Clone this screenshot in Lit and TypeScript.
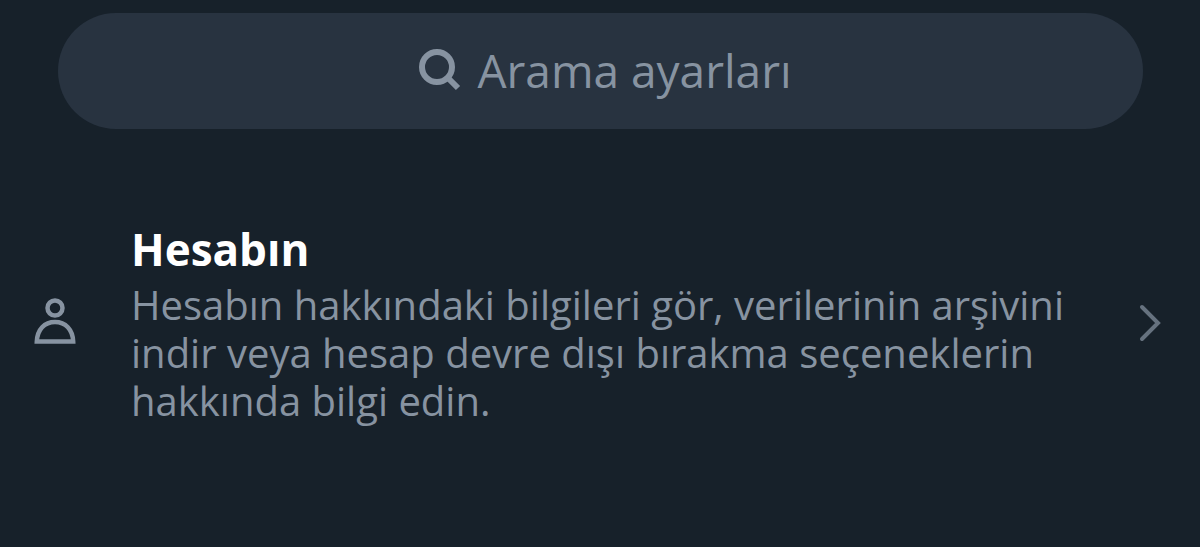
import { LitElement, html, css } from "lit";
import { customElement } from "lit/decorators.js";

@customElement("app-root")
export class AppRoot extends LitElement {
  static styles = css`
    :host {
      display: block;
      box-sizing: border-box;
      min-height: 100vh;
      padding: 13px 0 0;
      background: #17212a;
      color: #8793a1;
      font-family: "Open Sans", "Noto Sans", sans-serif;
    }
    .search {
      display: flex;
      align-items: center;
      justify-content: center;
      gap: 16px;
      box-sizing: border-box;
      height: 116px;
      margin: 0 57px 0 58px;
      padding: 0 0 2px 10px;
      border-radius: 58px;
      background: #283340;
      cursor: text;
    }
    .search-icon {
      width: 42px;
      height: 42px;
      flex: none;
    }
    .search-input {
      field-sizing: content;
      padding: 0;
      border: 0;
      outline: 0;
      background: none;
      color: inherit;
      font: 400 46px/64px "Open Sans", "Noto Sans", sans-serif;
    }
    .search-input::placeholder {
      color: inherit;
      opacity: 1;
    }
    .row {
      display: flex;
      align-items: center;
      gap: 55px;
      margin-top: 92px;
      padding: 0 39px 0 34px;
      color: inherit;
      text-decoration: none;
    }
    .person {
      width: 42px;
      height: 52px;
      flex: none;
    }
    .copy {
      display: flex;
      flex-direction: column;
      gap: 4px;
      flex: 1;
      min-width: 0;
    }
    .title {
      margin: 0;
      color: #fff;
      font-size: 44px;
      font-weight: 700;
      line-height: 56px;
    }
    .text {
      margin: 0;
      font-size: 40px;
      line-height: 48px;
    }
    .chevron {
      width: 22px;
      height: 38px;
      flex: none;
      color: #66727f;
    }
  `;

  render() {
    return html`
      <label class="search">
        <svg class="search-icon" viewBox="0 0 42 42" fill="none" stroke="currentColor" stroke-width="6" aria-hidden="true">
          <circle cx="18" cy="18" r="15" />
          <path d="M28.5 28.5 39 39" />
        </svg>
        <input class="search-input" type="text" placeholder="Arama ayarları" aria-label="Arama ayarları" />
      </label>
      <a class="row" href="#">
        <svg class="person" viewBox="0 0 42 52" fill="none" stroke="currentColor" stroke-width="4.500" aria-hidden="true">
          <circle cx="21" cy="11" r="7.500" />
          <path d="M2.800 44.500C3.300 32.500 10.500 25 21 25s17.700 7.500 18.200 19.500Z" />
        </svg>
        <div class="copy">
          <h2 class="title">Hesabın</h2>
          <p class="text">
            Hesabın hakkındaki bilgileri gör, verilerinin arşivini indir veya hesap devre dışı bırakma seçeneklerin
            hakkında bilgi edin.
          </p>
        </div>
        <svg class="chevron" viewBox="0 0 22 38" fill="none" stroke="currentColor" stroke-width="4" stroke-linecap="round" aria-hidden="true">
          <path d="M3 3 19 19 3 35" />
        </svg>
      </a>
    `;
  }
}
